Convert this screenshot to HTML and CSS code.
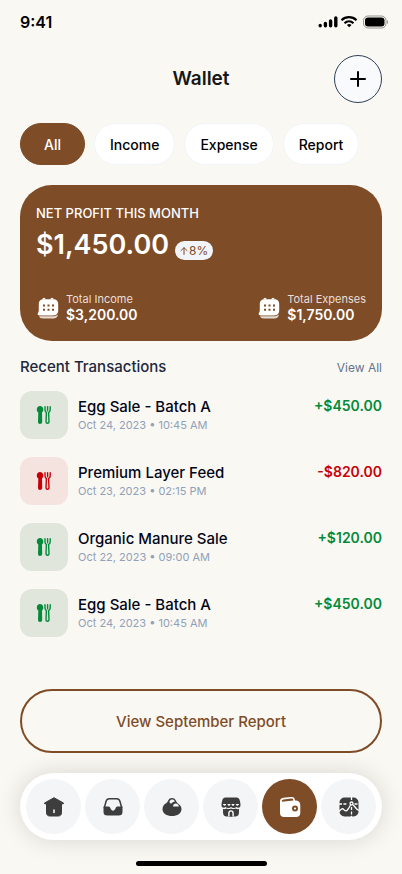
FILE: index.html
```html
<!DOCTYPE html>
<html lang="en">
<head>
<meta charset="utf-8">
<meta name="viewport" content="width=device-width, initial-scale=1">
<title>Wallet</title>
<link rel="stylesheet" href="styles.css">
</head>
<body>
<svg class="sprite" aria-hidden="true">
  <symbol id="utensils" viewBox="0 0 16 20">
    <path fill="currentColor" d="M4 1C2.200 1 .8 2.500.8 4.400c0 1.400.6 2.400 1.500 3L2 17c0 1.200.8 2 2 2s2.200-.8 2.200-2L6 7.400c.8-.6 1.300-1.600 1.300-3C7.300 2.500 5.800 1 4 1z"/>
    <path fill="none" stroke="currentColor" stroke-width="1.400" stroke-linecap="round" stroke-linejoin="round" d="M9 1.700v3c0 1.300.6 2.200 1.400 2.800L10 16.800c0 .9.600 1.500 1.500 1.500s1.500-.6 1.500-1.500l-.4-9.300c.9-.6 1.600-1.500 1.600-2.800v-3M11.600 1.700v4"/>
  </symbol>
  <symbol id="calendar" viewBox="0 0 24 24">
    <path fill="currentColor" d="M8 3.200h9c3.700 0 5.200 1.500 5.200 5v6c0 3.500-2 5.200-5.200 5.200H3.600c-1.500 0-2.200-.8-1.900-1.800.3-.8 1.100-1.200 1.100-4V8.200c0-3.500 1.600-5 5.200-5z"/>
    <path fill="none" stroke="currentColor" stroke-width="1.200" d="M7 3.500c0-1.600 2-1.600 2 0M15 3.500c0-1.600 2-1.600 2 0"/>
    <path fill="currentColor" opacity=".8" d="M3.200 20.200h14c2 0 3.500-.6 4.800-1.800-.4 2.700-2 4-4.800 4H7c-2.200 0-3.500-.7-3.800-2.200z"/>
    <path class="calendar-dots" d="M7 8.500h2v2H7zM11.500 8.500h2v2h-2zM16 8.500h2v2h-2zM7 12.800h2v2H7zM11.500 12.800h2v2h-2zM16 12.800h2v2h-2z"/>
  </symbol>
</svg>

<div class="screen">
  <div class="status">
    <span class="time">9:41</span>
    <svg width="70" height="14" viewBox="0 0 70 14" aria-hidden="true">
      <path stroke="#000" stroke-width="3.400" stroke-linecap="round" d="M2.200 10.400v.4M7.400 8.400v2.400M12.600 6v4.800M17.800 3v7.800"/>
      <path fill="none" stroke="#000" stroke-width="2.200" d="M23.500 5.200c4.200-4 10.800-4 15 0M26.500 8.200c2.600-2.400 6.400-2.400 9 0"/>
      <path d="M31.200 12.300 28.900 10c1.300-1.200 3.300-1.200 4.600 0z"/>
      <rect x="45.500" y="1" width="22.500" height="12" rx="4.500" fill="none" stroke="#000" stroke-opacity=".4"/>
      <rect x="47" y="2.500" width="19.500" height="9" rx="3"/>
      <path d="M69 5v4c1.300-.7 1.300-3.300 0-4z" opacity=".4"/>
    </svg>
  </div>

  <header class="header">
    <h1>Wallet</h1>
    <button class="add" type="button" aria-label="Add transaction">
      <svg width="16" height="16" viewBox="0 0 16 16" fill="none" stroke="#000" stroke-width="2" stroke-linecap="round"><path d="M8 1v14M1 8h14"/></svg>
    </button>
  </header>

  <div class="filters">
    <button class="chip active" type="button">All</button>
    <button class="chip" type="button">Income</button>
    <button class="chip" type="button">Expense</button>
    <button class="chip" type="button">Report</button>
  </div>

  <section class="profit">
    <h2>NET PROFIT THIS MONTH</h2>
    <div class="amount-row">
      <span class="amount">$1,450.00</span>
      <span class="badge"><svg width="8" height="8" viewBox="0 0 8 8" fill="none" stroke="currentColor" stroke-linecap="round" stroke-linejoin="round"><path d="M4 7.500V.8M1 3.600 4 .7l3 2.900"/></svg>8%</span>
    </div>
    <div class="totals">
      <div class="total">
        <svg width="24" height="24" aria-hidden="true"><use href="#calendar"/></svg>
        <div><p>Total Income</p><strong>$3,200.00</strong></div>
      </div>
      <div class="total">
        <svg width="24" height="24" aria-hidden="true"><use href="#calendar"/></svg>
        <div><p>Total Expenses</p><strong>$1,750.00</strong></div>
      </div>
    </div>
  </section>

  <section class="recent">
    <div class="recent-head">
      <h2>Recent Transactions</h2>
      <a href="#all">View All</a>
    </div>
    <ul>
      <li class="in">
        <span class="tile"><svg width="16" height="20" aria-hidden="true"><use href="#utensils"/></svg></span>
        <div class="info"><h3>Egg Sale - Batch A</h3><p>Oct 24, 2023 • 10:45 AM</p></div>
        <span class="value">+$450.00</span>
      </li>
      <li class="out">
        <span class="tile"><svg width="16" height="20" aria-hidden="true"><use href="#utensils"/></svg></span>
        <div class="info"><h3>Premium Layer Feed</h3><p>Oct 23, 2023 • 02:15 PM</p></div>
        <span class="value">-$820.00</span>
      </li>
      <li class="in">
        <span class="tile"><svg width="16" height="20" aria-hidden="true"><use href="#utensils"/></svg></span>
        <div class="info"><h3>Organic Manure Sale</h3><p>Oct 22, 2023 • 09:00 AM</p></div>
        <span class="value">+$120.00</span>
      </li>
      <li class="in">
        <span class="tile"><svg width="16" height="20" aria-hidden="true"><use href="#utensils"/></svg></span>
        <div class="info"><h3>Egg Sale - Batch A</h3><p>Oct 24, 2023 • 10:45 AM</p></div>
        <span class="value">+$450.00</span>
      </li>
    </ul>
  </section>

  <button class="report" type="button">View September Report</button>

  <nav class="tabs">
    <a href="#home" aria-label="Home">
      <svg width="22" height="22" viewBox="0 0 22 22"><path fill="currentColor" stroke="currentColor" stroke-linejoin="round" d="M11 1.700 1.500 7l.4 1 1.600-.5v9.300c0 2 1.200 3.200 3.200 3.200h8.600c2 0 3.200-1.200 3.200-3.200V7.500l1.600.5.400-1z"/><path stroke="#fff" stroke-width="1.500" stroke-linecap="round" d="M11 14v2.500"/></svg>
    </a>
    <a href="#inbox" aria-label="Inbox">
      <svg width="22" height="22" viewBox="0 0 22 22"><path fill="none" stroke="currentColor" stroke-width="1.500" d="M2.300 12 4 5.500C4.500 3.500 5.600 2.700 7.500 2.700h7c1.900 0 3 .8 3.500 2.800l1.700 6.500"/><path fill="currentColor" d="M1.500 10.500h4.800c1 0 1.600.5 2 1.500l.5 1c.4.900 1 1 1.700 1.400l.5.600.5-.6c.7-.4 1.300-.5 1.700-1.400l.5-1c.4-1 1-1.500 2-1.500h4.800v5c0 3-1.200 4-4 4h-11c-2.800 0-4-1-4-4z"/></svg>
    </a>
    <a href="#eggs" aria-label="Eggs">
      <svg width="22" height="22" viewBox="0 0 22 22"><path fill="currentColor" d="M7 4.800c1-2 2.400-2.700 4-2.700s3 .7 4 2.700c.4.800.7 1.600 1.600 2.400 2.300 1.300 3.900 3.500 3.900 5.800 0 4.500-4.200 7-9.500 7s-9.500-2.500-9.500-7c0-2.500 1.500-5 4-6 .8-.6 1.100-1.400 1.500-2.200z"/><path fill="#f4f5f7" d="M8.400 5.500c.8-1.400 1.800-2 2.800-2 1.100 0 2 .6 2.700 1.900-1.600.1-2.700.9-3.400 2.100-.9.100-1.900-.3-2.100-2z"/><path fill="#f4f5f7" d="M12 10.500c.1-1.700 1.200-2.900 2.700-2.900 1.600 0 2.900 1.200 3.200 2.900z"/></svg>
    </a>
    <a href="#store" aria-label="Store">
      <svg width="22" height="22" viewBox="0 0 22 22"><path fill="currentColor" d="M5.500 1.500h11c2 0 3 1.200 3.600 4.200.5 2.500.6 4.300-.1 5.300-1 1-2.500 1-3.500 0-1.500 1.200-4.200 1.200-5.500 0-1.300 1.200-4 1.200-5.500 0-1 1-2.500 1-3.500 0-.7-1-.6-2.800-.1-5.300.6-3 1.600-4.200 3.600-4.200z"/><path fill="#fff" d="M3 8h3.200c-.1 2.200-3 2.200-3.200 0zM7.500 8h3c-.2 2.400-2.800 2.400-3 0zM11.500 8h3c-.2 2.400-2.800 2.400-3 0zM15.800 8H19c-.2 2.200-3.100 2.200-3.200 0z"/><path fill="currentColor" d="M3 13c1.300.3 2.500.1 3.500-.5 1.400.8 3.200.8 4.500 0 1.300.8 3.100.8 4.500 0 1 .6 2.200.8 3.500.5v3c0 3-1.200 4.500-4 4.500H7c-2.800 0-4-1.500-4-4.500z"/><path fill="currentColor" stroke="#fff" stroke-width="1.400" d="M8.900 20.500v-3.300c0-1.500.8-2.300 2.100-2.300s2.100.8 2.100 2.300v3.300"/></svg>
    </a>
    <a class="current" href="#wallet" aria-label="Wallet" aria-current="page">
      <svg width="24" height="24" viewBox="0 0 24 24"><path fill="currentColor" d="M2 6.500C2 4.200 3.200 3.100 5.500 2.800L13 2c2.500-.3 3.800.8 4 3.500 3.700.1 5.300 1.500 5.300 5v6.700c0 3.500-1.500 4.800-5 4.800H6.500C3.300 22 2 20.700 2 17.300z"/><path class="wallet-cut" d="M3.800 6.300c0-1.200.6-1.700 1.800-1.900l7.600-.9c1.400-.1 2 .5 2.200 1.900L3.800 6.800z"/><circle class="wallet-cut" cx="17" cy="13.500" r="3"/><circle cx="17" cy="13.500" r="1.100" fill="currentColor"/></svg>
    </a>
    <a href="#reports" aria-label="Reports">
      <svg width="22" height="22" viewBox="0 0 22 22"><rect x="1.500" y="1.500" width="19" height="19" rx="5" fill="currentColor"/><g fill="none" stroke="#fff" stroke-width="1.300"><path stroke-dasharray="3 1.400" d="M1 8h8M16.500 8H21M13.500 1v4.500M13.500 11v10"/><path stroke-linejoin="round" d="M1 15.500c2.500-3 3.500-3.500 5-1.800 2 2 2.700 1.300 4.500-1.200L12.500 9"/><path d="m15 8.700 2 2.300c1.300 1.800 2.500 3 4 3.500"/><circle cx="13.500" cy="7.500" r="1.500"/></g></svg>
    </a>
  </nav>
  <div class="home-bar"></div>
</div>
</body>
</html>
```
FILE: styles.css
```css
* { box-sizing: border-box; }

body {
  margin: 0;
  background: #faf8f3;
  color: #020618;
  font-family: Inter, "Liberation Sans", sans-serif;
}

h1, h2, h3, p, ul { margin: 0; padding: 0; font-weight: 500; }
ul { list-style: none; }
a { text-decoration: none; }
button { font: inherit; cursor: pointer; }
svg { display: block; flex: none; }
.sprite { position: absolute; width: 0; height: 0; }

.screen {
  display: flex;
  flex-direction: column;
  min-height: 100vh;
  padding: 0 20px 8px;
}

.status {
  display: flex;
  justify-content: space-between;
  align-items: center;
  height: 44px;
  margin-right: -6px;
  color: #000;
}
.time { font-size: 16px; font-weight: 600; }

.header {
  display: grid;
  grid-template-columns: 48px 1fr 48px;
  align-items: center;
  margin-top: 11px;
}
.header h1 {
  grid-column: 2;
  text-align: center;
  font-size: 19px;
  font-weight: 600;
  line-height: 24px;
  color: #171717;
}
.add {
  display: grid;
  place-items: center;
  width: 48px;
  height: 48px;
  padding: 0;
  border: 1px solid #314158;
  border-radius: 50%;
  background: #f8fafc;
}

.filters { display: flex; gap: 9px; margin-top: 20px; }
.chip {
  height: 42px;
  padding: 0 15px;
  border: 1px solid #f1f5f9;
  border-radius: 21px;
  background: #fff;
  color: #000;
  font-size: 14px;
  font-weight: 500;
}
.chip.active { padding: 0 23px; border-color: #7e4c27; background: #7e4c27; color: #fff; }

.profit {
  margin-top: 20px;
  padding: 20px 16px 18px;
  border-radius: 32px;
  background: #7e4c27;
  color: #fff;
}
.profit h2 { font-size: 13px; line-height: 16px; }
.amount-row { display: flex; align-items: flex-end; gap: 6px; margin-top: 6px; }
.amount { font-size: 27px; line-height: 36px; font-weight: 600; }
.badge {
  display: flex;
  align-items: center;
  gap: 1px;
  height: 19px;
  margin-bottom: 3px;
  padding: 0 5px;
  border-radius: 10px;
  background: #f1f5f9;
  color: #7e4c27;
  font-size: 12px;
}
.totals { display: flex; justify-content: space-between; margin-top: 29px; }
.total { display: flex; align-items: center; gap: 6px; }
.total p { font-size: 11px; font-weight: 400; color: #e9dfd8; line-height: 15px; }
.total strong { display: block; font-size: 14px; font-weight: 600; line-height: 16px; }
.calendar-dots { fill: #7e4c27; }

.recent { margin-top: 16px; }
.recent-head { display: flex; justify-content: space-between; align-items: center; }
.recent-head h2 { font-size: 15px; line-height: 20px; color: #1d293d; }
.recent-head a { font-size: 12px; color: #62748e; }
.recent ul { display: grid; gap: 18px; margin-top: 14px; }
.recent li { display: flex; gap: 10px; }
.tile {
  display: grid;
  place-items: center;
  width: 48px;
  height: 48px;
  border-radius: 12px;
}
.info { flex: 1; padding-top: 6px; }
.info h3 { font-size: 15px; line-height: 20px; }
.info p { font-size: 11px; font-weight: 400; line-height: 16px; color: #90a1b9; }
.value { padding-top: 6px; font-size: 14px; font-weight: 600; line-height: 18px; }
.in .tile { background: #e0e6dc; color: #058a3a; }
.in .value { color: #058a3a; }
.out .tile { background: #f5e3df; color: #c70008; }
.out .value { color: #c70008; }

.report {
  height: 64px;
  margin-top: 52px;
  border: 2px solid #7e4c27;
  border-radius: 32px;
  background: transparent;
  color: #7e4c27;
  font-size: 15px;
  font-weight: 500;
}

.tabs {
  display: flex;
  justify-content: space-between;
  margin-top: 20px;
  padding: 6px;
  border-radius: 34px;
  background: #fff;
  box-shadow: 0 0 24px rgba(0, 0, 0, 0.14);
}
.tabs a {
  display: grid;
  place-items: center;
  width: 55px;
  height: 55px;
  border-radius: 50%;
  background: #f4f5f7;
  color: #3d3d3d;
}
.tabs .current { background: #7e4c27; color: #fff; }
.wallet-cut { fill: #7e4c27; }

.home-bar {
  width: 131px;
  height: 5px;
  margin: 21px auto 0;
  border-radius: 3px;
  background: #000;
}
```
